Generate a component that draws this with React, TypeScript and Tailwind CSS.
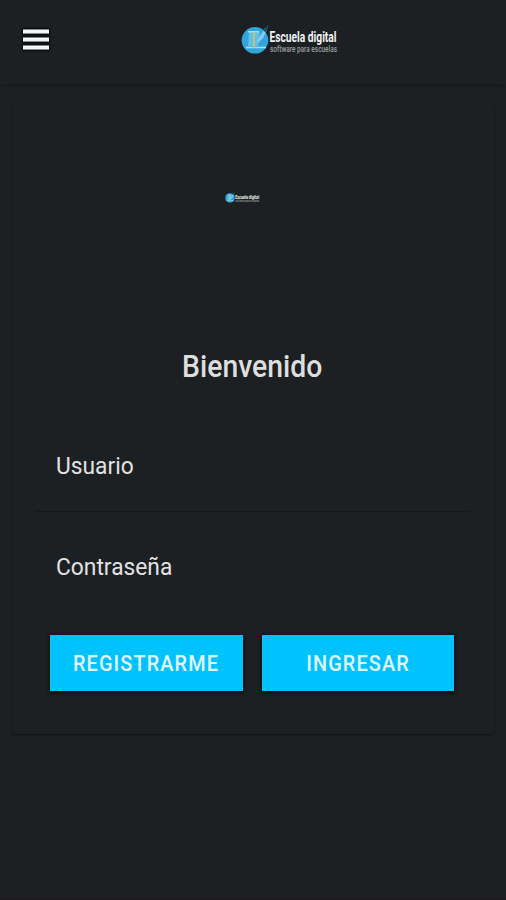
import React, { useState } from "react";

const Logo = ({ className }: { className: string }) => (
  <svg viewBox="0 0 98 36" className={className} role="img" aria-label="Escuela digital">
    <circle cx="14" cy="19.3" r="13.3" fill="#2fa5dc" />
    <path d="M8 11h11l-2 14H7z" fill="#62bfe6" />
    <path d="M7 10.8h11M5 26.5h20" stroke="#a9def3" strokeWidth="1.4" />
    <path d="M13 11v16" stroke="#c9bd7c" strokeWidth="2" />
    <path d="M16 20L24 7l2 2-4 8-5 5z" fill="#86cdec" />
    <path d="M22 9l6-6-3 9z" fill="#1c4f60" />
    <text
      x="28.5"
      y="21"
      fill="#f2f4f5"
      fontSize="15"
      fontWeight="700"
      textLength="67"
      lengthAdjust="spacingAndGlyphs"
    >
      Escuela digital
    </text>
    <text
      x="29"
      y="30.5"
      fill="#9a9fa1"
      fontSize="9"
      fontWeight="500"
      textLength="67"
      lengthAdjust="spacingAndGlyphs"
    >
      software para escuelas
    </text>
  </svg>
);

const App = () => {
  const [formData, setFormData] = useState({ usuario: "", password: "" });

  const handleChange = (e: React.ChangeEvent<HTMLInputElement>) => {
    setFormData({ ...formData, [e.target.name]: e.target.value });
  };

  return (
    <div className="flex h-[900px] w-[506px] flex-col overflow-hidden border-b border-[#1d1620] bg-[#1c2022] font-['Roboto',sans-serif] text-[#dedede]">
      <header className="flex h-[84px] shrink-0 items-start shadow-[0_1px_3px_#171a1c]">
        <button aria-label="Menu" className="mt-[29px] ml-[23px] flex w-[26px] flex-col gap-[3px]">
          <span className="h-[5px] w-full border-y border-[#85898b] bg-[#f4f4f4] shadow-[0_0_2px_1px_#090b0c]" />
          <span className="h-[5px] w-full border-y border-[#85898b] bg-[#f4f4f4] shadow-[0_0_2px_1px_#090b0c]" />
          <span className="h-[5px] w-full border-y border-[#85898b] bg-[#f4f4f4] shadow-[0_0_2px_1px_#090b0c]" />
        </button>
        <Logo className="mt-[21px] ml-[192px] h-9 w-[98px] overflow-visible" />
      </header>

      <main className="mx-3 mt-[22px] flex h-[628px] flex-col rounded-[3px] shadow-[0_1px_2px_#101314]">
        <Logo className="mt-[85px] ml-[213px] h-[13px] w-[35px] overflow-visible" />

        <h1 className="mt-[143px] text-center text-[30px] leading-[40px] font-medium">
          <span className="inline-block origin-center translate-x-[-1px] scale-x-[0.945] scale-y-[1.02]">
            Bienvenido
          </span>
        </h1>

        <form className="mt-[23px] flex flex-col px-6">
          <div className="h-[102px] border-b border-[#15181a] pl-5">
            <input
              name="usuario"
              placeholder="Usuario"
              value={formData.usuario}
              onChange={handleChange}
              className="h-full w-full origin-left scale-x-[0.93] pt-[9px] text-[24.5px] outline-none placeholder:text-[#e2e2e2]"
            />
          </div>
          <div className="h-[102px] pl-5">
            <input
              name="password"
              type="password"
              placeholder="Contraseña"
              value={formData.password}
              onChange={handleChange}
              className="h-full w-full origin-left scale-x-[0.93] pt-[7px] text-[24.5px] outline-none placeholder:text-[#e2e2e2]"
            />
          </div>
          <div className="mt-[21px] ml-[14px] flex gap-[19px] text-[21.5px] font-medium tracking-[1.2px] text-[#e0f7ff]">
            <button type="button" className="h-[56px] w-[193px] bg-[#00c2ff] shadow-[0_1px_3px_1px_#0b0d0e]">
              <span className="inline-block translate-x-[-1px] translate-y-[1px] scale-x-[0.925]">REGISTRARME</span>
            </button>
            <button type="button" className="h-[56px] w-[192px] bg-[#00c2ff] shadow-[0_1px_3px_1px_#0b0d0e]">
              <span className="inline-block translate-y-[1px] scale-x-[0.925]">INGRESAR</span>
            </button>
          </div>
        </form>
      </main>
    </div>
  );
};

export default App;
